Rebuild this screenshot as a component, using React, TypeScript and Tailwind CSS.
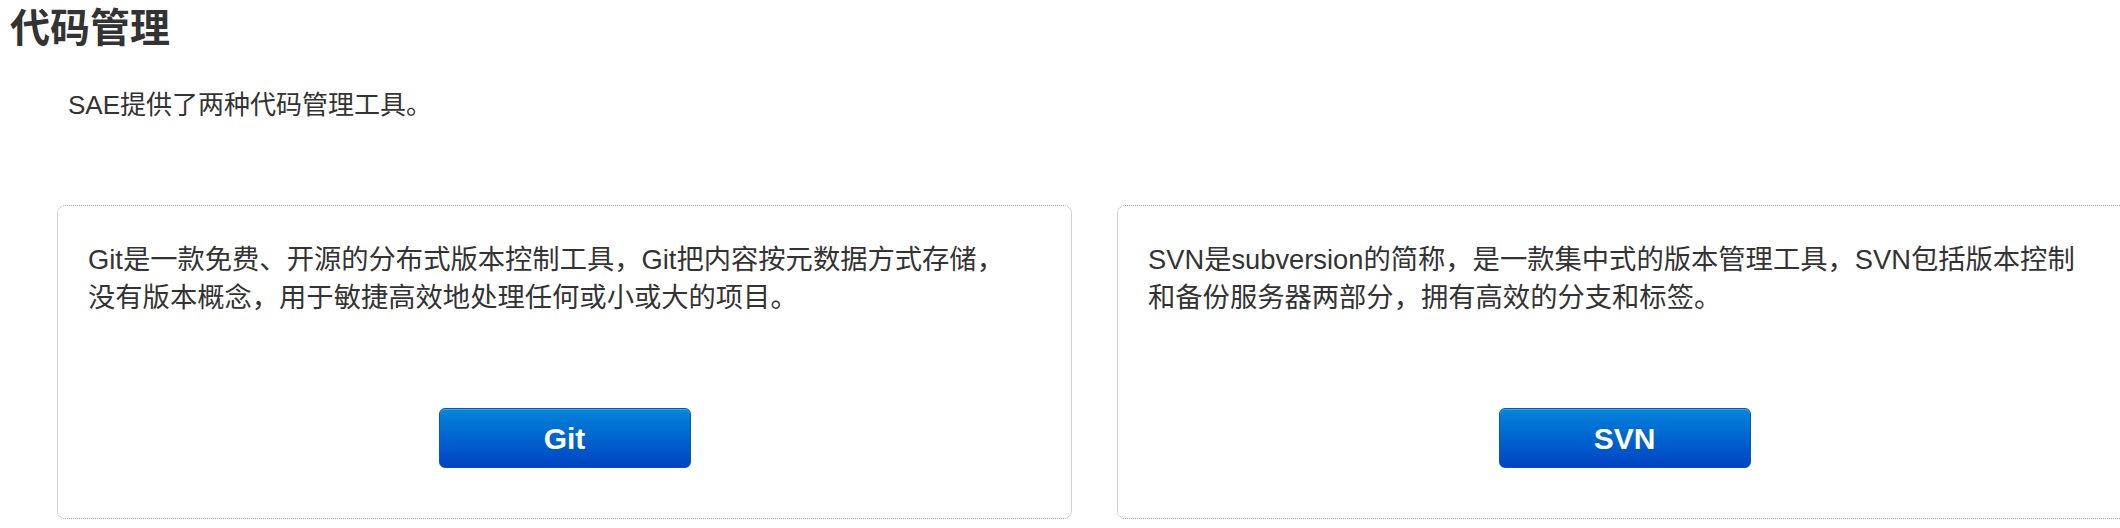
import React from "react";

type Tool = {
  name: string;
  lines: string[];
};

const tools: Tool[] = [
  {
    name: "Git",
    lines: [
      "Git是一款免费、开源的分布式版本控制工具，Git把内容按元数据方式存储，",
      "没有版本概念，用于敏捷高效地处理任何或小或大的项目。",
    ],
  },
  {
    name: "SVN",
    lines: [
      "SVN是subversion的简称，是一款集中式的版本管理工具，SVN包括版本控制",
      "和备份服务器两部分，拥有高效的分支和标签。",
    ],
  },
];

function ToolCard({ tool }: { tool: Tool }) {
  return (
    <div className="flex h-[314px] w-[1015px] shrink-0 flex-col rounded-[8px] border border-dotted border-[#a6a6a6] px-[30px] pt-[35px] pb-[50px]">
      <p className="whitespace-nowrap text-[27.3px] leading-[38px]">
        {tool.lines.map((line, i) => (
          <span key={i} className="block">
            {line}
          </span>
        ))}
      </p>
      <button className="mt-auto h-[60px] w-[252px] self-center rounded-[6px] border border-[#0a56b8] bg-gradient-to-b from-[#0b84da] to-[#0042c2] text-[30px] font-bold text-white shadow-[inset_0_1px_0_rgba(255,255,255,0.25)]">
        {tool.name}
      </button>
    </div>
  );
}

export default function App() {
  return (
    <div className="h-[528px] w-[2120px] overflow-hidden bg-white font-['Liberation_Sans','Noto_Sans_CJK_SC',sans-serif] text-[#333]">
      <h1 className="pl-[10px] pt-[6px] text-[40px] font-bold leading-[44px]">代码管理</h1>
      <p className="mt-[36px] pl-[68px] text-[26px] leading-[38px]">SAE提供了两种代码管理工具。</p>
      <div className="mt-[81px] flex gap-[45px] pl-[57px]">
        {tools.map((t) => (
          <ToolCard key={t.name} tool={t} />
        ))}
      </div>
    </div>
  );
}
